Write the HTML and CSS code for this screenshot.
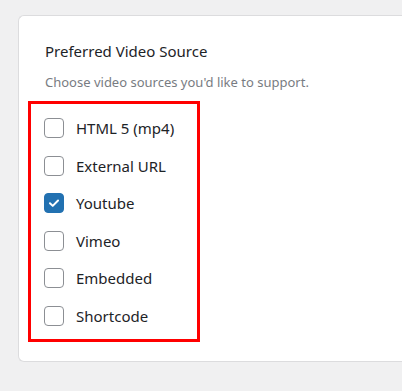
FILE: index.html
```html
<!DOCTYPE html>
<html>
<head>
<meta charset="utf-8">
<link rel="stylesheet" href="styles.css">
</head>
<body>
<div class="card">
  <h2 class="title">Preferred Video Source</h2>
  <p class="desc">Choose video sources you'd like to support.</p>
  <ul class="options">
    <li class="option"><span class="box"></span><span class="label">HTML 5 (mp4)</span></li>
    <li class="option"><span class="box"></span><span class="label">External URL</span></li>
    <li class="option"><span class="box checked"><svg viewBox="0 0 20 20" width="20" height="20"><path d="M5.5 10.2 L8.6 13.2 L14.5 7.2" fill="none" stroke="#fff" stroke-width="2.2" stroke-linecap="round" stroke-linejoin="round"/></svg></span><span class="label">Youtube</span></li>
    <li class="option"><span class="box"></span><span class="label">Vimeo</span></li>
    <li class="option"><span class="box"></span><span class="label">Embedded</span></li>
    <li class="option"><span class="box"></span><span class="label">Shortcode</span></li>
  </ul>
</div>
</body>
</html>
```

FILE: styles.css
```css
html, body {
  margin: 0;
  padding: 0;
  background: #f0f0f1;
  font-family: "Noto Sans", "Open Sans", sans-serif;
}
body {
  padding: 15px 0 0 18px;
  overflow: hidden;
}
.card {
  background: #fff;
  border: 1px solid #dcdcde;
  border-right: none;
  border-radius: 6px 0 0 6px;
  padding: 25px 0 19px 26px;
}
.title {
  margin: 0;
  font-size: 15px;
  font-weight: 400;
  line-height: 20px;
  color: #1d2327;
}
.desc {
  margin: 11px 0 0;
  font-size: 13px;
  line-height: 20px;
  color: #787c82;
}
.options {
  list-style: none;
  margin: 9px 0 0 -17px;
  padding: 14px 13px 13px 13px;
  border: 3px solid #ff0000;
  width: 140px;
  box-sizing: content-box;
}
.option {
  display: flex;
  align-items: center;
  gap: 12px;
  height: 20px;
  margin-bottom: 17.6px;
}
.option:last-child {
  margin-bottom: 0;
}
.box {
  width: 20px;
  height: 20px;
  box-sizing: border-box;
  border: 1px solid #8c8f94;
  border-radius: 4px;
  flex: none;
  display: flex;
  align-items: center;
  justify-content: center;
}
.box.checked {
  background: #2271b1;
  border-color: #2271b1;
}
.box svg {
  display: block;
}
.label {
  font-size: 15px;
  line-height: 20px;
  color: #1d2327;
}
```
